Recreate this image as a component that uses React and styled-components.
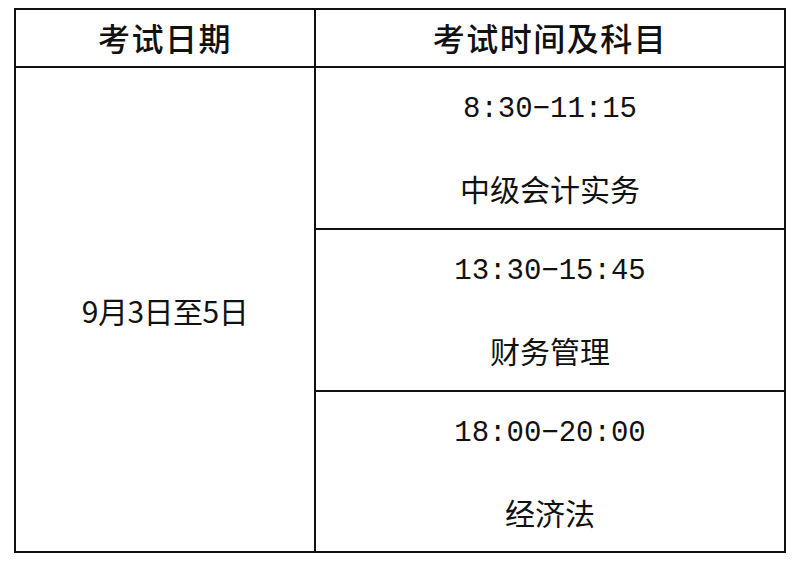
import React from 'react';
import styled, { createGlobalStyle } from 'styled-components';

const GlobalStyle = createGlobalStyle`
  html, body {
    margin: 0;
    padding: 0;
    background: #fff;
  }
  body {
    font-family: "Noto Sans CJK SC", "Noto Sans", sans-serif;
    color: #111;
  }
`;

const Page = styled.div`
  padding: 8px 0 0 14px;
`;

const Table = styled.div`
  display: grid;
  grid-template-columns: 300px 470px;
  grid-template-rows: 58px 162px 162px 161px;
  width: max-content;
  border-top: 2px solid #111;
  border-left: 2px solid #111;
`;

const Cell = styled.div`
  border-right: 2px solid #111;
  border-bottom: 2px solid #111;
  display: flex;
  flex-direction: column;
  align-items: center;
  justify-content: center;
  box-sizing: border-box;
`;

const HeadCell = styled(Cell)`
  font-size: 32px;
  font-weight: 500;
  letter-spacing: 1.5px;
  padding-bottom: 2px;
`;

const DateCell = styled(Cell)`
  grid-row: 2 / span 3;
  font-size: 30px;
  letter-spacing: -0.5px;
`;

const Line = styled.div`
  height: 80px;
  line-height: 80px;
  white-space: nowrap;
`;

const Time = styled(Line)`
  font-family: "Liberation Mono", "DejaVu Sans Mono", monospace;
  font-size: 29px;
  line-height: 84px;
`;

const Subject = styled(Line)`
  font-size: 30px;
`;

const sessions = [
  { time: '8:30−11:15', subject: '中级会计实务' },
  { time: '13:30−15:45', subject: '财务管理' },
  { time: '18:00−20:00', subject: '经济法' },
];

export default function App() {
  return (
    <>
      <GlobalStyle />
      <Page>
        <Table>
          <HeadCell>考试日期</HeadCell>
          <HeadCell>考试时间及科目</HeadCell>
          <DateCell>9月3日至5日</DateCell>
          {sessions.map((s) => (
            <Cell key={s.time}>
              <Time>{s.time}</Time>
              <Subject>{s.subject}</Subject>
            </Cell>
          ))}
        </Table>
      </Page>
    </>
  );
}
